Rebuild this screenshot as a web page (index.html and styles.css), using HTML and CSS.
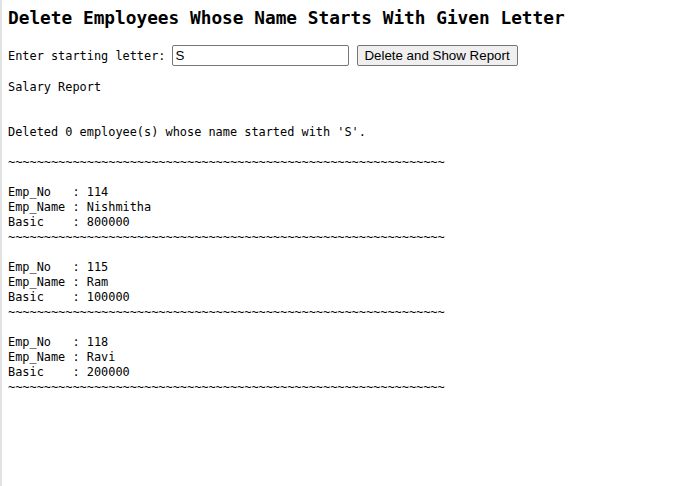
FILE: index.html
```html
<!DOCTYPE html>
<html>
<head>
<meta charset="utf-8">
<title>Delete Employees</title>
<link rel="stylesheet" href="styles.css">
</head>
<body>
<div class="page">
  <h2 class="title">Delete Employees Whose Name Starts With Given Letter</h2>
  <form class="form-row">
    <label class="label" for="letter">Enter starting letter:</label>
    <input class="field" id="letter" type="text" value="S">
    <button class="btn" type="button">Delete and Show Report</button>
  </form>
  <pre class="report">Salary Report


Deleted 0 employee(s) whose name started with 'S'.

~~~~~~~~~~~~~~~~~~~~~~~~~~~~~~~~~~~~~~~~~~~~~~~~~~~~~~~~~~~~~

Emp_No   : 114
Emp_Name : Nishmitha
Basic    : 800000
~~~~~~~~~~~~~~~~~~~~~~~~~~~~~~~~~~~~~~~~~~~~~~~~~~~~~~~~~~~~~

Emp_No   : 115
Emp_Name : Ram
Basic    : 100000
~~~~~~~~~~~~~~~~~~~~~~~~~~~~~~~~~~~~~~~~~~~~~~~~~~~~~~~~~~~~~

Emp_No   : 118
Emp_Name : Ravi
Basic    : 200000
~~~~~~~~~~~~~~~~~~~~~~~~~~~~~~~~~~~~~~~~~~~~~~~~~~~~~~~~~~~~~</pre>
</div>
</body>
</html>
```
FILE: styles.css
```css
html, body {
  margin: 0;
  padding: 0;
  background: #fff;
  height: 100%;
}
body {
  font-family: "DejaVu Sans Mono", "Liberation Mono", monospace;
  color: #000;
}
.page {
  box-sizing: border-box;
  min-height: 100%;
  border-left: 2px solid #e2e2e2;
  padding: 7px 6px;
  display: flex;
  flex-direction: column;
  align-items: flex-start;
}
.title {
  margin: 0;
  font-size: 17.8px;
  line-height: 22px;
  font-weight: bold;
}
.form-row {
  margin: 16px 0 0;
  display: flex;
  align-items: center;
  height: 21px;
}
.label {
  font-size: 11.9px;
  margin-right: 6px;
}
.field {
  box-sizing: border-box;
  width: 177px;
  height: 21px;
  margin: 0;
  padding: 1px 3px;
  border: 1px solid #767676;
  border-radius: 2px;
  font-family: "Liberation Sans", Arial, sans-serif;
  font-size: 13.33px;
  color: #000;
  background: #fff;
}
.btn {
  box-sizing: border-box;
  width: 161px;
  height: 21px;
  margin: 0 0 0 8px;
  padding: 0 6px;
  border: 1px solid #767676;
  border-radius: 2px;
  background: #efefef;
  font-family: "Liberation Sans", Arial, sans-serif;
  font-size: 13.33px;
  color: #000;
}
.report {
  margin: 14px 0 0;
  font-family: "DejaVu Sans Mono", "Liberation Mono", monospace;
  font-size: 11.9px;
  line-height: 15px;
}
```
